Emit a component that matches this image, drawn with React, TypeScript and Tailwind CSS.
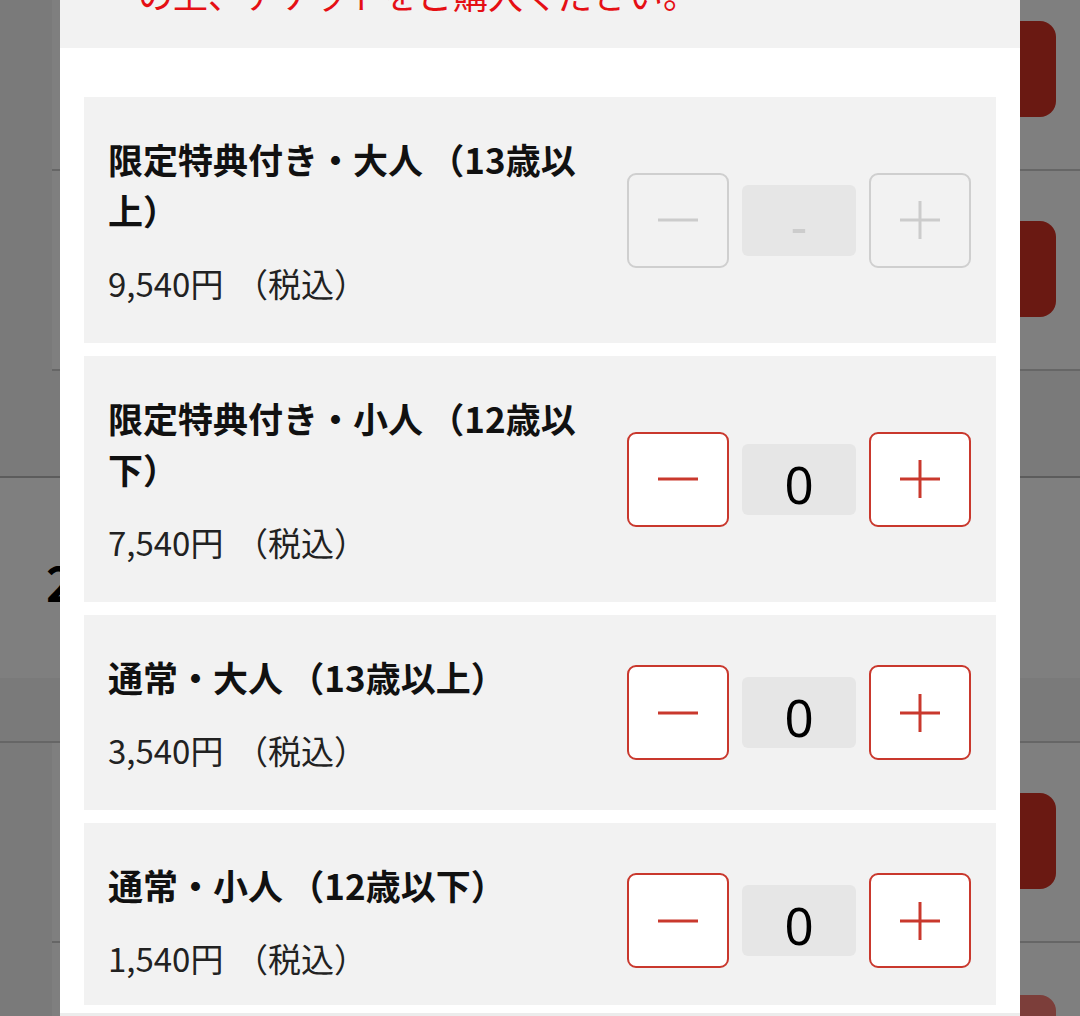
import React from "react";

type Item = {
  title: string;
  price: string;
  disabled?: boolean;
};

const items: Item[] = [
  { title: "限定特典付き・大人（13歳以上）", price: "9,540円（税込）", disabled: true },
  { title: "限定特典付き・小人（12歳以下）", price: "7,540円（税込）" },
  { title: "通常・大人（13歳以上）", price: "3,540円（税込）" },
  { title: "通常・小人（12歳以下）", price: "1,540円（税込）" },
];

function JpText({ text, gap }: { text: string; gap: string }) {
  const parts = text.split("（");
  return (
    <>
      {parts.map((p, i) => (
        <React.Fragment key={i}>
          {i > 0 && <span className={gap}>（</span>}
          {p}
        </React.Fragment>
      ))}
    </>
  );
}

function MinusIcon({ color }: { color: string }) {
  return (
    <svg width="42" height="42" viewBox="0 0 42 42" fill="none">
      <line x1="1" y1="21" x2="41" y2="21" stroke={color} strokeWidth="3" />
    </svg>
  );
}

function PlusIcon({ color }: { color: string }) {
  return (
    <svg width="42" height="42" viewBox="0 0 42 42" fill="none">
      <line x1="1" y1="21" x2="41" y2="21" stroke={color} strokeWidth="3" />
      <line x1="21" y1="2" x2="21" y2="40" stroke={color} strokeWidth="3" />
    </svg>
  );
}

function Counter({ disabled }: { disabled?: boolean }) {
  const color = disabled ? "#cccccc" : "#c9382d";
  const btn = disabled
    ? "border-[#cfcfcf] bg-transparent"
    : "border-[#c9382d] bg-white";
  return (
    <div className="flex items-center gap-[13px] shrink-0">
      <button
        className={`w-[102px] h-[95px] rounded-[9px] border-2 flex items-center justify-center ${btn}`}
      >
        <MinusIcon color={color} />
      </button>
      <div
        className={`w-[114px] h-[71px] rounded-[6px] bg-[#e6e6e6] flex items-center justify-center pt-[10px] text-[51px] leading-none font-['Noto_Sans',sans-serif] ${
          disabled ? "text-[#cccccc]" : "text-black"
        }`}
      >
        {disabled ? "-" : "0"}
      </div>
      <button
        className={`w-[102px] h-[95px] rounded-[9px] border-2 flex items-center justify-center ${btn}`}
      >
        <PlusIcon color={color} />
      </button>
    </div>
  );
}

function BgRow({ button }: { button?: boolean }) {
  return (
    <div className="h-[200px] ml-[52px] bg-white border-b-2 border-[#cccccc] flex items-start justify-end pr-[24px] pt-[50px]">
      {button && <div className="w-[200px] h-[96px] rounded-[16px] bg-[#d53324]" />}
    </div>
  );
}

export default function App() {
  return (
    <div className="relative w-[1080px] h-[1016px] overflow-hidden bg-white font-['Noto_Sans_CJK_JP',sans-serif]">
      {/* Background page */}
      <div className="flex flex-col">
        <div className="bg-[#f4f4f4]">
          <div className="h-[171px] ml-[52px] bg-white border-b-2 border-[#cccccc] flex items-start justify-end pr-[24px] pt-[21px]">
            <div className="w-[200px] h-[96px] rounded-[16px] bg-[#d53324]" />
          </div>
          <BgRow button />
          <div className="h-[105px] bg-[#f4f4f4]" />
        </div>
        <div className="h-[202px] bg-white border-t-2 border-[#b8b8b8] flex items-center pl-[46px]">
          <span className="text-[48px] font-bold text-black leading-none pt-[6px]">2</span>
        </div>
        <div className="h-[65px] bg-[#f4f4f4] border-b-2 border-[#cccccc]" />
        <div className="bg-[#f4f4f4]">
          <BgRow button />
          <div className="h-[200px] ml-[52px] bg-white flex items-start justify-end pr-[24px] pt-[52px]">
            <div className="w-[200px] h-[96px] rounded-[16px] bg-[#f87c74]" />
          </div>
        </div>
      </div>

      {/* Overlay + modal */}
      <div className="fixed inset-0 bg-black/50 flex justify-center">
        <div className="w-[960px] h-[1016px] bg-white flex flex-col">
          <div className="h-[48px] shrink-0 bg-[#f2f2f2] overflow-hidden pl-[78px]">
            <p className="mt-[-32px] text-[35px] leading-[51px] text-[#e50f14] whitespace-nowrap">
              の上、チケットをご購入ください。
            </p>
          </div>
          <div className="h-[957px] shrink-0 overflow-hidden">
            <div className="pt-[49px] px-[24px] flex flex-col gap-[13px]">
              {items.map((it, i) => (
                <div
                  key={i}
                  className="bg-[#f2f2f2] pl-[24px] pr-[25px] py-[36px] flex items-center justify-between gap-[24px]"
                >
                  <div className="flex-1 min-w-0">
                    <div className="text-[35px] leading-[51px] font-bold text-[#111111]">
                      <JpText text={it.title} gap="ml-[0.18em]" />
                    </div>
                    <div className="mt-[24px] text-[33px] leading-[48px] text-[#222222]">
                      <JpText text={it.price} gap="ml-[0.35em]" />
                    </div>
                  </div>
                  <Counter disabled={it.disabled} />
                </div>
              ))}
            </div>
          </div>
          <div className="h-[8px] shrink-0 bg-white" />
          <div className="flex-1 bg-white border-t-[3px] border-[#ececec]" />
        </div>
      </div>
    </div>
  );
}
